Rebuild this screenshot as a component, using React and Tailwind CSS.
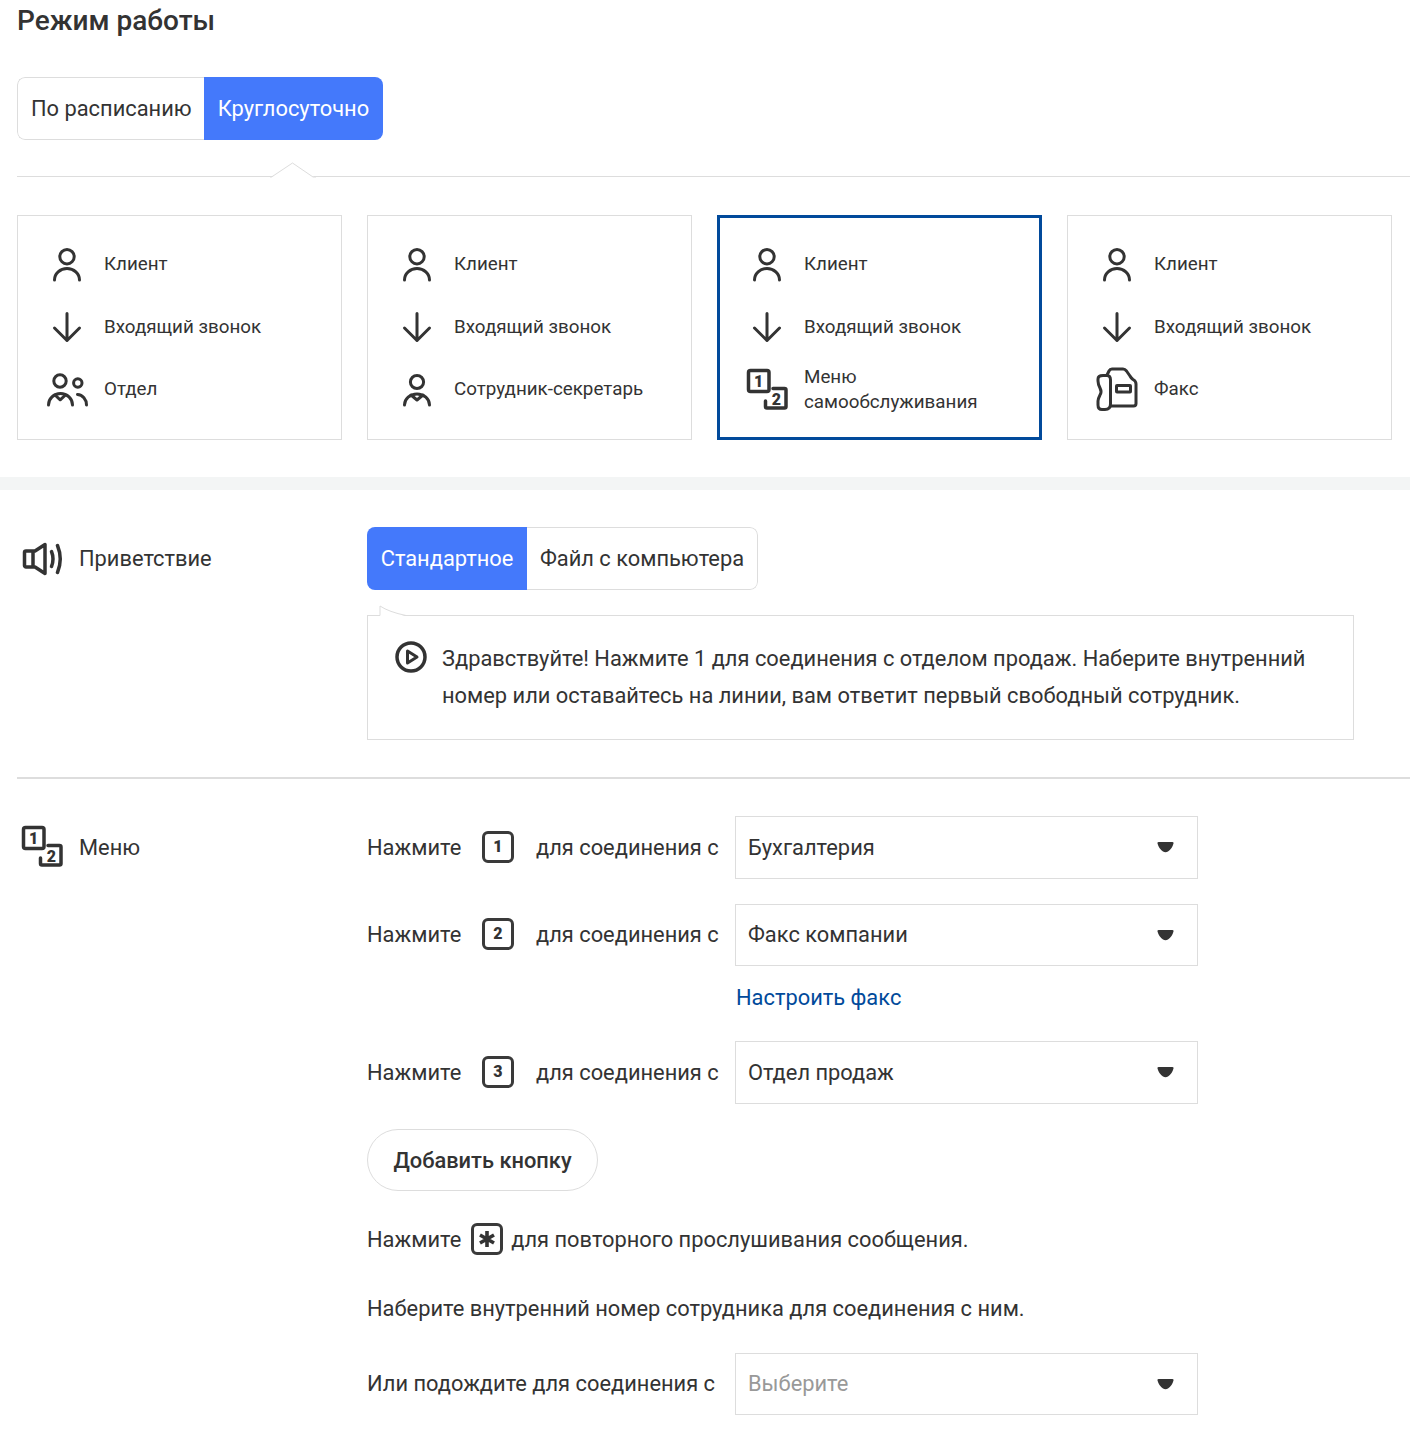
import React from "react";

const S = { fill: "none", stroke: "#333", strokeWidth: 3, strokeLinecap: "round", strokeLinejoin: "round" };

function IconBox({ children, w = 42, h = 42 }) {
  return (
    <svg width={w} height={h} viewBox={`0 0 ${w} ${h}`} className="shrink-0" {...S}>
      {children}
    </svg>
  );
}

const Person = () => (
  <IconBox>
    <circle cx="21" cy="13.7" r="7.2" />
    <path d="M8.5 37a12.5 11.5 0 0 1 25 0" />
  </IconBox>
);
const Arrow = () => (
  <IconBox>
    <path d="M21 8.500v27M8.500 23 21 35.500 33.500 23" />
  </IconBox>
);
const Group = () => (
  <IconBox>
    <circle cx="14" cy="13" r="6.200" />
    <circle cx="31.800" cy="15" r="4.200" />
    <path d="M2.500 37a11.500 11 0 0 1 24 0" />
    <path d="M9 27l5.200 4.800L19.500 27" />
    <path d="M31.500 26.500a9.500 10.500 0 0 1 9 10.500" />
  </IconBox>
);
const Secretary = () => (
  <IconBox>
    <circle cx="21" cy="14" r="6.600" />
    <path d="M8.500 37a12.500 11 0 0 1 25 0" />
    <path d="M15 27l6 5 6-5" />
  </IconBox>
);
const Menu = () => (
  <IconBox>
    <rect x="2.500" y="2.500" width="20.500" height="21" rx="2" strokeWidth="3.500" />
    <text x="12.700" y="18.500" fontFamily="Roboto" fontSize="16" fontWeight="900" fill="#333" stroke="none" textAnchor="middle">1</text>
    <path d="M27 20.500h11.500a1.500 1.500 0 0 1 1.500 1.500v16.500a1.500 1.500 0 0 1-1.500 1.500H21a1.500 1.500 0 0 1-1.500-1.500V33" strokeWidth="3.500" />
    <text x="30.500" y="36.500" fontFamily="Roboto" fontSize="16" fontWeight="900" fill="#333" stroke="none" textAnchor="middle">2</text>
  </IconBox>
);
const Fax = () => (
  <svg width="42" height="45" viewBox="0 -1 42 45" className="shrink-0" {...S}>
    <path d="M7 8.500H11Q14.500 8.500 14.500 13V37Q14.500 42.500 9 42.500H6Q2 42.500 2 38V34Q2 32 4 28Q6 25 4 21Q2 17 2 14V12Q2 8.500 7 8.500Z" />
    <path d="M11 8 13 4Q14 2 16 2H27Q29 2 30.500 4L34 9Q35 11 37 12.500Q40 14 40 17V36.500Q40 39 37.500 39H14.500" />
    <rect x="20.500" y="18.500" width="14" height="6.500" rx="0.500" />
  </svg>
);
const Speaker = () => (
  <svg width="42" height="34" viewBox="0 0 42 34" className="shrink-0" {...S} strokeWidth="3.500">
    <path d="M4 9h9l10-6.500v29L13 25H4a1.500 1.500 0 0 1-1.500-1.500v-13A1.500 1.500 0 0 1 4 9ZM11 9v16" />
    <path d="M29.500 9.500q3 7.500 0 15" />
    <path d="M35.500 3.500q5.500 13.500 0 27" />
  </svg>
);
const Play = () => (
  <svg width="32" height="32" viewBox="0 0 32 32" className="shrink-0" {...S} strokeWidth="3.500">
    <circle cx="16" cy="16" r="14" />
    <path d="M12.500 10v12l9.500-6Z" strokeWidth="3" />
  </svg>
);
const Key = ({ k, star }) => (
  <span className="-mt-[2px] flex h-[32px] w-[32px] shrink-0 items-center justify-center rounded-[6px] border-[3.500px] border-[#3a3a3a] text-[16px] leading-none font-black text-[#333]">
    {star ? (
      <svg width="18" height="18" viewBox="0 0 18 18" stroke="#333" strokeWidth="3.600" strokeLinecap="butt">
        <path d="M9 1v16M2 5l14 8M16 5 2 13" />
      </svg>
    ) : (
      k
    )}
  </span>
);

function Select({ value, placeholder, short }) {
  return (
    <div className={`relative flex w-[463px] shrink-0 items-center border border-[#ddd] pl-[12px] ${short ? "h-[62px]" : "h-[63px]"} ${placeholder ? "text-[#999]" : ""}`}>
      {value}
      <svg width="17" height="11" viewBox="0 0 17 11" className="absolute right-[23.500px] top-[25px]">
        <path d="M1.500 0h14q1.500 0 1 1.500Q15 7 11 9.500q-2.500 1.500-5 0Q2 7 .5 1.500 0 0 1.500 0Z" fill="#333" />
      </svg>
    </div>
  );
}

const Row = ({ ic, children, low }) => (
  <div className="flex h-[62.500px] items-center gap-[16px]">
    {ic}
    <span className={low ? "mt-[3px]" : "mt-[1px]"}>{children}</span>
  </div>
);

function Card({ icon, label, selected }) {
  return (
    <div className={`h-[225px] w-[325px] text-[18.800px] leading-[25px] ${selected ? "border-[3px] border-[#014a9b] pt-[14.400px] pl-[26px]" : "border border-[#ddd] pt-[16.400px] pl-[28px]"}`}>
      <Row ic={<Person />}>Клиент</Row>
      <Row ic={<Arrow />} low>Входящий звонок</Row>
      <Row ic={icon} low={selected}>{label}</Row>
    </div>
  );
}

function PressRow({ k, value, short, className = "" }) {
  return (
    <div className={`flex items-center ${className}`}>
      <span className="w-[115px]">Нажмите</span>
      <Key k={k} />
      <span className="ml-[22px] w-[199px]">для соединения с</span>
      <Select value={value} short={short} />
    </div>
  );
}

export default function App() {
  return (
    <div className="h-[1440px] overflow-hidden bg-white text-[21.850px] leading-[38px] text-[#333] font-['Roboto',sans-serif]">
      <div className="pl-[17px]">
        <h1 className="h-[77px] text-[28px] leading-[42px] font-medium">Режим работы</h1>
        <div className="flex h-[63px] w-[366px] overflow-hidden rounded-[8px]">
          <div className="flex w-[187px] items-center rounded-l-[8px] border border-r-0 border-[#ddd] pl-[13px]">По расписанию</div>
          <div className="flex flex-1 items-center justify-center bg-[#4479fb] text-white">Круглосуточно</div>
        </div>
        <div className="relative mt-[36px] h-[1px] bg-[#ddd]">
          <svg width="46" height="16" viewBox="0 0 46 16" className="absolute left-[253px] top-[-14.500px]">
            <path d="M0 15 L2 15 L23 1 L44 15 L46 15 L46 16 L0 16Z" fill="#fff" stroke="none" />
            <path d="M0 15 H1.500 L22.500 1 L43 15 H46" fill="none" stroke="#ddd" />
          </svg>
        </div>
        <div className="mt-[38px] flex gap-[25px]">
          <Card icon={<Group />} label="Отдел" />
          <Card icon={<Secretary />} label="Сотрудник-секретарь" />
          <Card icon={<Menu />} label={<>Меню<br />самообслуживания</>} selected />
          <Card icon={<Fax />} label="Факс" />
        </div>
      </div>

      <div className="mt-[37px] h-[13px] bg-[#f3f5f5]" />

      <div className="pl-[17px]">
        <div className="mt-[37px] flex">
          <div className="flex h-[63px] w-[350px] shrink-0 items-center pl-[5px]">
            <Speaker />
            <span className="ml-[15px]">Приветствие</span>
          </div>
          <div>
            <div className="flex h-[63px] w-[391px] overflow-hidden rounded-[8px]">
              <div className="flex w-[160px] items-center justify-center bg-[#4479fb] text-white">Стандартное</div>
              <div className="flex flex-1 items-center justify-center rounded-r-[8px] border border-l-0 border-[#ddd]">Файл с компьютера</div>
            </div>
            <div className="relative mt-[25px] flex h-[125px] w-[987px] border border-[#ddd] pt-[24px] pl-[27px]">
              <svg width="30" height="12" viewBox="0 0 30 12" className="absolute left-[11px] top-[-11px]">
                <path d="M1 11V1Q10 6 26 11Z" fill="#fff" stroke="none" />
                <path d="M1 10.500V1Q10 7 27 10.500" fill="none" stroke="#ddd" />
              </svg>
              <div className="mt-[1px]"><Play /></div>
              <p className="ml-[15px] w-[900px] leading-[37px]">
                Здравствуйте! Нажмите 1 для соединения с отделом продаж. Наберите внутренний<br />
                номер или оставайтесь на линии, вам ответит первый свободный сотрудник.
              </p>
            </div>
          </div>
        </div>

        <div className="mt-[37px] h-[2px] bg-[#ddd]" />

        <div className="mt-[37px] flex">
          <div className="flex h-[63px] w-[350px] shrink-0 items-start pt-[9px] pl-[4px]">
            <Menu />
            <span className="ml-[16px] mt-[4px]">Меню</span>
          </div>
          <div>
            <PressRow k="1" value="Бухгалтерия" />
            <PressRow k="2" value="Факс компании" short className="mt-[25px]" />
            <div className="mt-[13px] h-[38px] pl-[369px] text-[#014a9b]">Настроить факс</div>
            <PressRow k="3" value="Отдел продаж" className="mt-[24px]" />
            <div className="mt-[25px] flex h-[62px] w-[231px] items-center justify-center rounded-full border border-[#ddd] pt-[2px] font-medium">Добавить кнопку</div>
            <div className="mt-[30px] flex h-[38px] items-center">
              <span>Нажмите</span>
              <span className="ml-[9.500px] mr-[8.500px]"><Key star /></span>
              <span>для повторного прослушивания сообщения.</span>
            </div>
            <div className="mt-[31px] h-[38px]">Наберите внутренний номер сотрудника для соединения с ним.</div>
            <div className="mt-[25px] flex items-center">
              <span className="w-[368px]">Или подождите для соединения с</span>
              <Select value="Выберите" placeholder short />
            </div>
          </div>
        </div>
      </div>
    </div>
  );
}
